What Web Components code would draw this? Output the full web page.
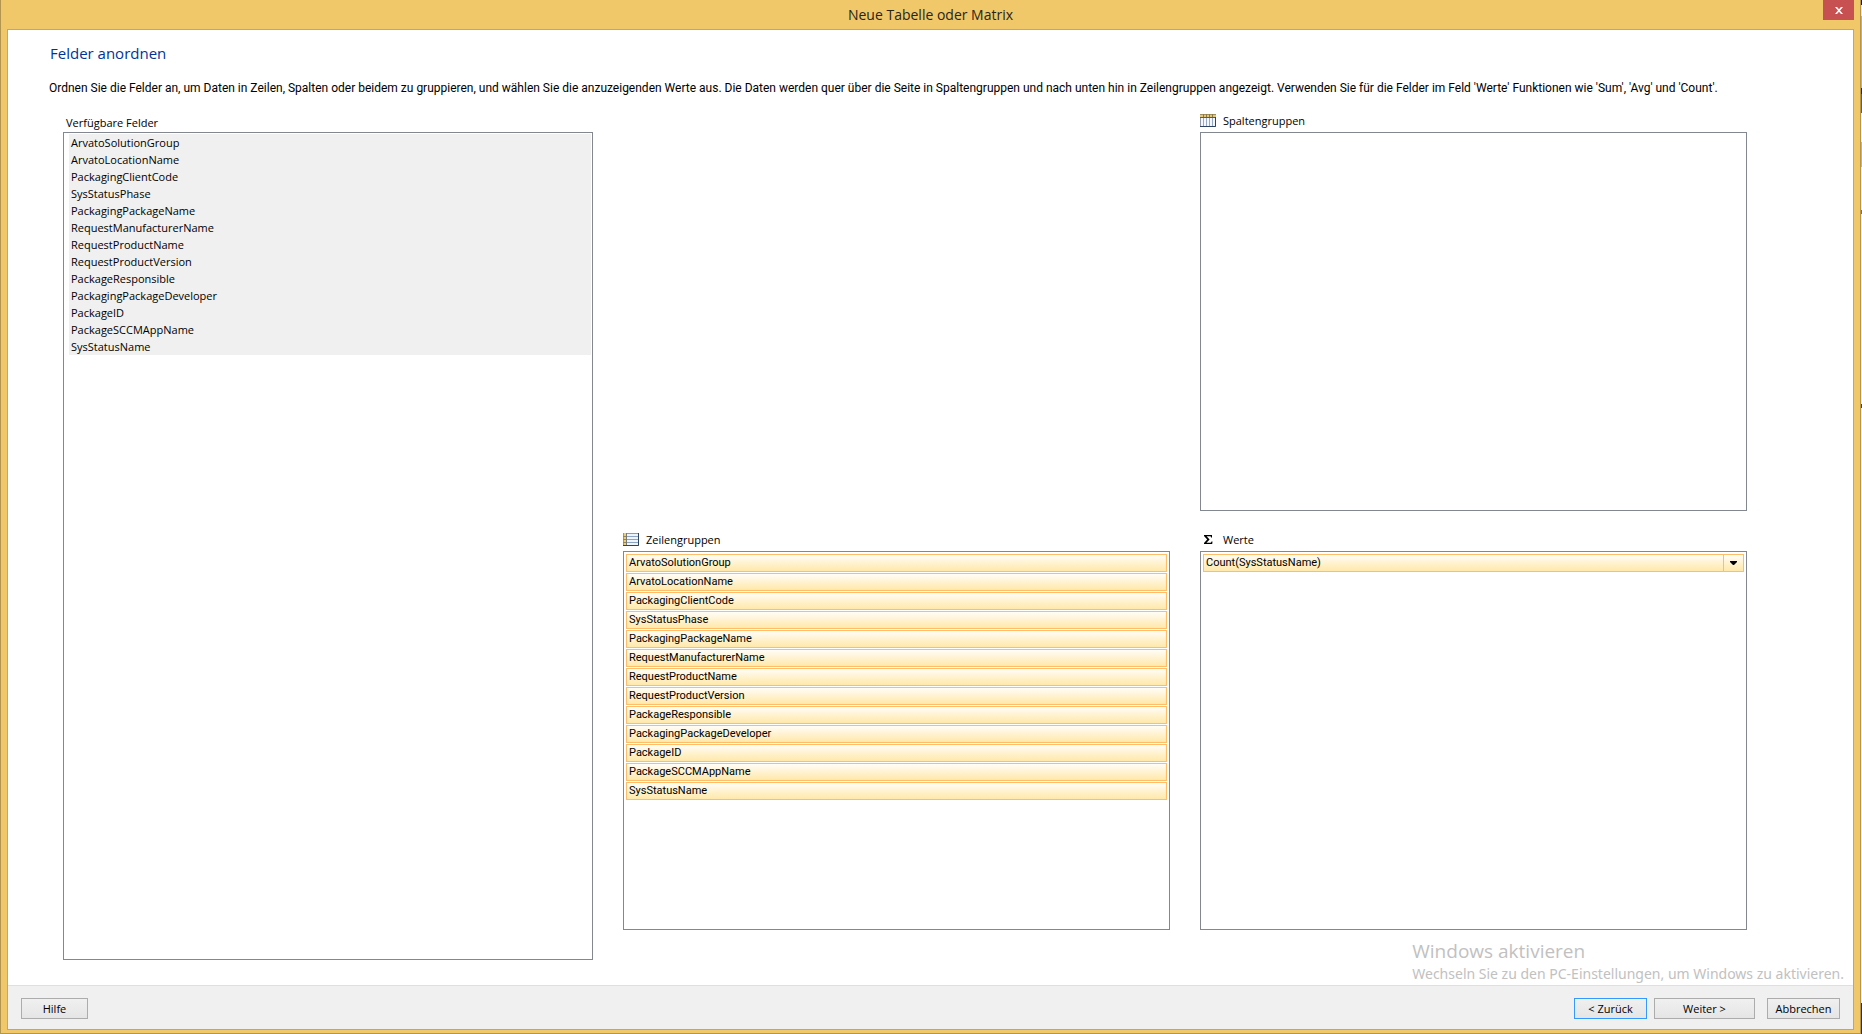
<!DOCTYPE html>
<html lang="de">
<head>
<meta charset="utf-8">
<title>Neue Tabelle oder Matrix</title>
<style>
  html, body { margin: 0; height: 100%; }
  body { font: 11px/17px "Open Sans", "Noto Sans", sans-serif; color: #000; background: #fff; }
</style>
</head>
<body>
<wizard-window caption="Neue Tabelle oder Matrix">
  <arrange-fields></arrange-fields>
  <activation-notice slot="notice"></activation-notice>
  <wizard-button slot="help" size="small">Hilfe</wizard-button>
  <wizard-button slot="actions" focused>&lt; Zurück</wizard-button>
  <wizard-button slot="actions" size="wide">Weiter &gt;</wizard-button>
  <wizard-button slot="actions" apart>Abbrechen</wizard-button>
</wizard-window>

<script>
class BaseElement extends HTMLElement {
  connectedCallback() {
    if (this.shadowRoot) return;
    const root = this.attachShadow({ mode: 'open' });
    root.innerHTML = '<style>*{box-sizing:border-box}</style>' + this.render();
  }
}

customElements.define('wizard-window', class extends BaseElement {
  render() {
    return `
    <style>
      :host { display: flex; min-height: 100vh; box-sizing: border-box; }
      .frame { flex: 1; display: flex; flex-direction: column; background: #f0c869;
        border: solid #b2954e; border-width: 0 1px 1px; padding: 0 6px 3px; }
      .desktop { width: 1px; background: linear-gradient(#1c1c1c 0 5px, #e4e4e4 5px 16px,
        #9fb3ca 16px 88px, #1d2f3c 88px 94px, #42648a 94px 113px, #f2f2f2 113px 142px,
        #a6b7cd 142px 167px, #ececec 167px 210px, #8d6b52 210px 214px, #ececec 214px 404px,
        #444 404px 408px, #ececec 408px 1003px, #26343c 1003px); }
      header { height: 29px; display: grid; grid-template-columns: 1fr auto 1fr; align-items: start; }
      h1 { grid-column: 2; margin: 0; font-size: 14px; line-height: 29px; font-weight: 400; color: #2a2419; }
      .close { justify-self: end; width: 31px; height: 20px; padding: 0; border: 0; background: #c75050;
        display: grid; place-items: center; }
      .client { flex: 1; display: flex; flex-direction: column; background: #fff; border: 1px solid #c9a75a; }
      main { flex: 1; display: flex; flex-direction: column; position: relative; }
      .notice { position: absolute; right: 9px; bottom: 1px; }
      footer { display: flex; justify-content: space-between; padding: 12px 13px 9px; height: 44px;
        background: #f0f0f0; border-top: 1px solid #dfdfdf; }
      .actions { display: flex; gap: 7px; }
    </style>
    <div class="frame">
      <header><h1>${this.getAttribute('caption')}</h1>
        <button class="close" aria-label="Schließen"><svg width="8" height="7" viewBox="0 0 8 7"><path d="M0 0h2L4 2.300 6 0H8L5 3.500 8 7H6L4 4.700 2 7H0l3-3.500z" fill="#fff"/></svg></button>
      </header>
      <div class="client">
        <main><slot></slot><div class="notice"><slot name="notice"></slot></div></main>
        <footer><slot name="help"></slot><div class="actions"><slot name="actions"></slot></div></footer>
      </div>
    </div>
    <div class="desktop"></div>`;
  }
});

customElements.define('wizard-button', class extends BaseElement {
  render() {
    return `
    <style>
      :host { display: block; width: 73px; }
      :host([size=small]) { width: 67px; }
      :host([size=wide]) { width: 101px; }
      :host([apart]) { margin-left: 5px; }
      button { display: block; width: 100%; height: 21px; padding: 0; font: inherit; line-height: 19px; color: #000;
        border: 1px solid #acacac; background: linear-gradient(#f0f0f0, #e5e5e5); }
      :host([focused]) button { border-color: #3399ff; }
    </style>
    <button type="button"><slot></slot></button>`;
  }
});

customElements.define('activation-notice', class extends BaseElement {
  render() {
    return `
    <style>
      :host { display: block; color: #c1c1c1; font-family: "Noto Sans", sans-serif; font-size: 14px; line-height: 20px; }
      p { margin: 0; }
      .title { font-family: "Open Sans", sans-serif; font-size: 19px; line-height: 25px; }
    </style>
    <p class="title">Windows aktivieren</p>
    <p>Wechseln Sie zu den PC-Einstellungen, um Windows zu aktivieren.</p>`;
  }
});

const ICONS = {
  columns: `<rect width="16" height="13" fill="#8f99a8"/><rect x="1" y="4" width="14" height="8" fill="#f4f8fd"/>
    <path d="M0 1h16v2H0z" fill="#e3c778"/><path d="M0 0h16v1H0z" fill="#a08f5e"/><path d="M0 3h16v1H0z" fill="#575c60"/>
    <path d="M3.500 0v3M6.500 0v3M9.500 0v3M12.500 0v3" stroke="#8e7942"/>
    <path d="M3.500 4v8M6.500 4v8M9.500 4v8M12.500 4v8" stroke="#96aac5"/><path d="M15.500 3v9.500H0" fill="none" stroke="#2d435f"/>`,
  rows: `<rect width="16" height="13" fill="#8f99a8"/><rect x="4" y="1" width="11" height="11" fill="#eef4fc"/>
    <path d="M1 0h2v13H1z" fill="#edcf73"/><path d="M0 0h1v13H0z" fill="#a99760"/><path d="M3 0h1v13H3z" fill="#74797f"/>
    <path d="M0 3.500h3M0 6.500h3M0 9.500h3" stroke="#9a8349"/>
    <path d="M4 3.500h11M4 6.500h11M4 9.500h11" stroke="#8da3c3"/><path d="M15.500 0v12.500H0" fill="none" stroke="#2d435f"/>`,
  sum: `<path d="M4 2h8v2.500h-1c0-1-.3-1.300-1.200-1.300H6.600L9.600 6.500 6.500 9.800h3.600c.8 0 1.200-.4 1.400-1.300h1L12.200 11H4V10l3.200-3.500L4 3z" fill="#000"/>`
};

customElements.define('field-panel', class extends BaseElement {
  render() {
    const icon = this.getAttribute('icon');
    return `
    <style>
      :host { display: flex; flex-direction: column; min-width: 0; }
      .label { display: flex; align-items: center; gap: 7px; height: 21px; padding-bottom: 2px; }
      .label.plain { padding: 2px 0 0 3px; }
      svg { display: block; }
      .box { flex: 1; border: 1px solid #828790; padding: 2px; }
      .box.plain { padding: 1px 1px 1px 5px; }
    </style>
    <div class="label ${icon ? '' : 'plain'}">${icon ? `<svg width="16" height="13" viewBox="0 0 16 13">${ICONS[icon]}</svg>` : ''}<span id="l">${this.getAttribute('label')}</span></div>
    <div class="box ${icon ? '' : 'plain'}" role="group" aria-labelledby="l"><slot></slot></div>`;
  }
});

customElements.define('field-list', class extends BaseElement {
  render() {
    return `
    <style>
      :host { display: block; }
      ul { list-style: none; margin: 0; padding: 0; background: #f0f0f0; }
      li { height: 17px; line-height: 17px; padding-left: 2px; }
    </style>
    <ul>${this.getAttribute('fields').split(' ').map(f => `<li>${f}</li>`).join('')}</ul>`;
  }
});

customElements.define('field-chip', class extends BaseElement {
  render() {
    return `
    <style>
      :host { display: flex; height: 18px; margin-bottom: 1px; box-sizing: border-box; border: 1px solid #ffbd69;
        background: linear-gradient(#fffdf7, #ffe8a9); font-family: Roboto, sans-serif; }
      span { flex: 1; padding-left: 2px; line-height: 15px; }
      button { width: 20px; padding: 0; border: 0; border-left: 1px solid #ffbd69; background: none;
        display: grid; place-items: center; }
    </style>
    <span><slot></slot></span>${this.hasAttribute('menu') ? '<button type="button" aria-label="Funktion wählen"><svg width="7" height="4" viewBox="0 0 7 4"><path d="M0 0h7v1L4 4H3L0 1z"/></svg></button>' : ''}`;
  }
});

const FIELDS = ['ArvatoSolutionGroup', 'ArvatoLocationName', 'PackagingClientCode', 'SysStatusPhase',
  'PackagingPackageName', 'RequestManufacturerName', 'RequestProductName', 'RequestProductVersion',
  'PackageResponsible', 'PackagingPackageDeveloper', 'PackageID', 'PackageSCCMAppName', 'SysStatusName'];

customElements.define('arrange-fields', class extends BaseElement {
  render() {
    return `
    <style>
      :host { flex: 1; display: flex; flex-direction: column; }
      h2 { margin: 13px 42px 0; font-size: 15px; line-height: 20px; font-weight: 400; color: #003399; }
      .intro { margin: 16px 41px 0; font-family: Roboto, sans-serif; font-size: 12px; line-height: 18px; }
      .grid { flex: 1; display: grid; grid-template-columns: 530fr 547fr 547fr; grid-template-rows: 1fr 1fr;
        column-gap: 30px; row-gap: 19px; padding: 14px 106px 55px 55px; }
      .available { grid-row: 1 / 3; margin-bottom: -30px; }
      .columns { grid-column: 3; }
      .rows { grid-column: 2; }
    </style>
    <h2>Felder anordnen</h2>
    <p class="intro">Ordnen Sie die Felder an, um Daten in Zeilen, Spalten oder beidem zu gruppieren, und wählen Sie die anzuzeigenden Werte aus. Die Daten werden quer über die Seite in Spaltengruppen und nach unten hin in Zeilengruppen angezeigt. Verwenden Sie für die Felder im Feld 'Werte' Funktionen wie 'Sum', 'Avg' und 'Count'.</p>
    <div class="grid">
      <field-panel class="available" label="Verfügbare Felder"><field-list fields="${FIELDS.join(' ')}"></field-list></field-panel>
      <field-panel class="columns" label="Spaltengruppen" icon="columns"></field-panel>
      <field-panel class="rows" label="Zeilengruppen" icon="rows">${FIELDS.map(f => `<field-chip>${f}</field-chip>`).join('')}</field-panel>
      <field-panel label="Werte" icon="sum"><field-chip menu>Count(SysStatusName)</field-chip></field-panel>
    </div>`;
  }
});
</script>
</body>
</html>
